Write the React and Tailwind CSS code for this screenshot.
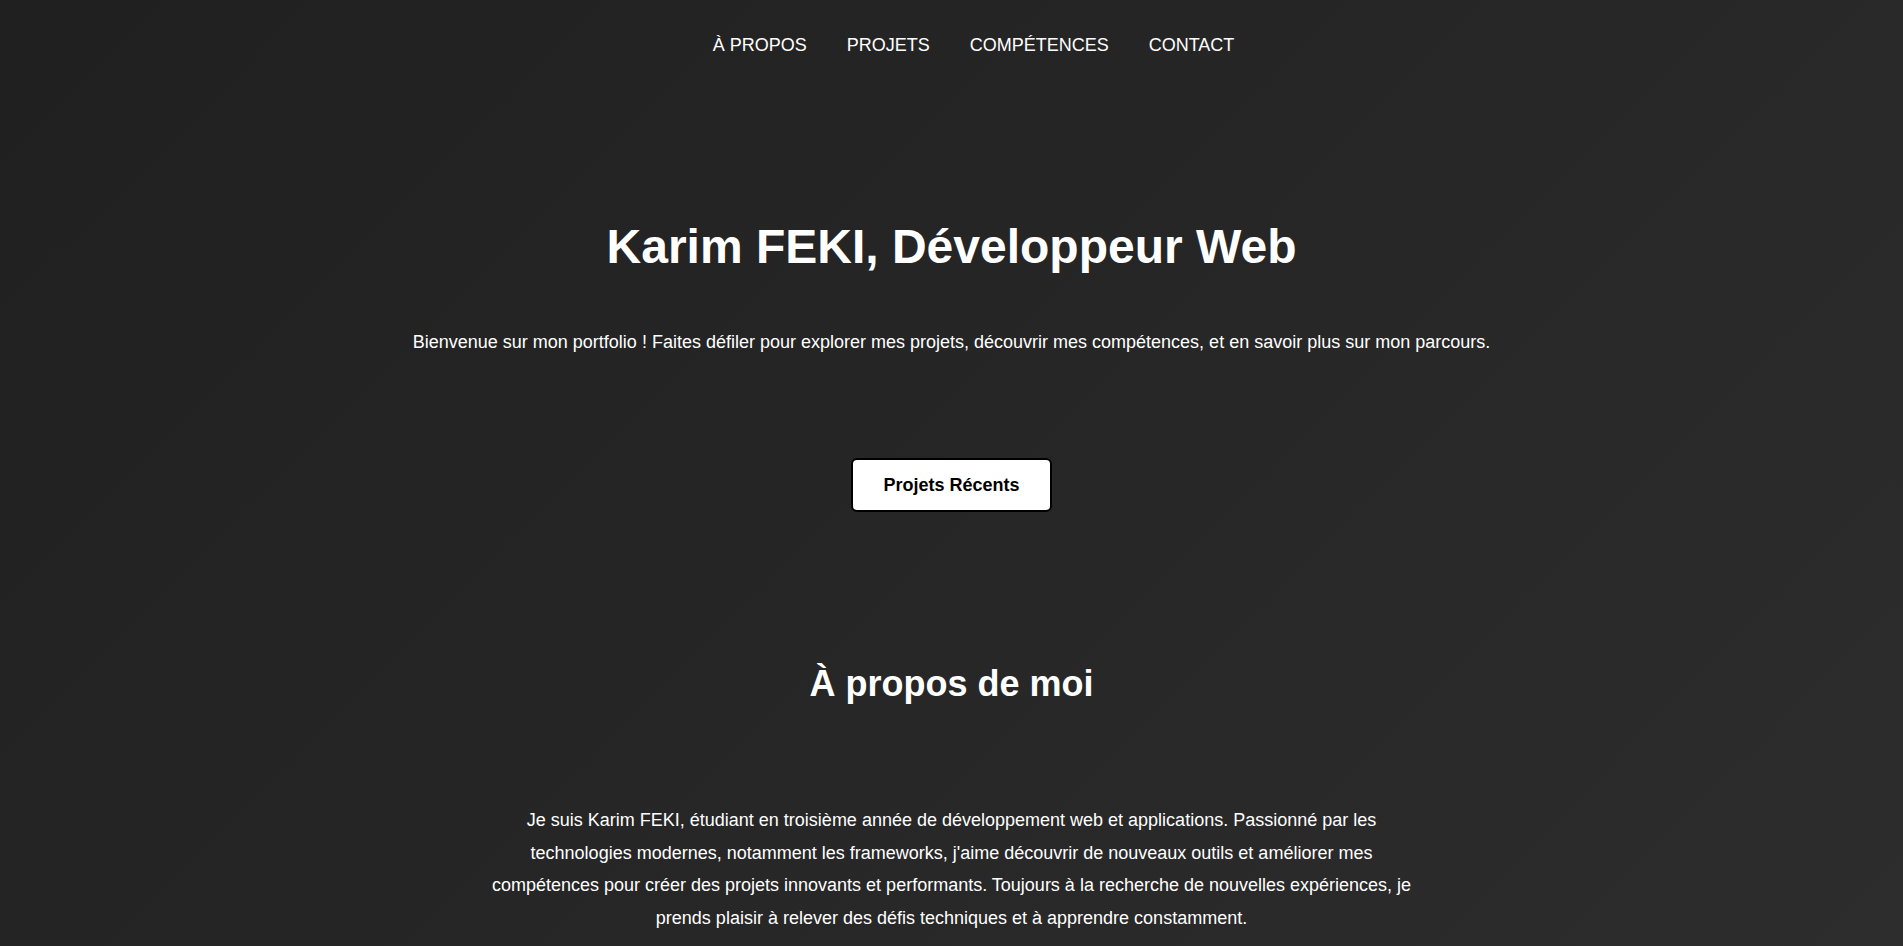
export default function App() {
  const font = { fontFamily: '"Liberation Sans", Arial, Helvetica, sans-serif' };
  return (
    <div
      className="min-h-screen w-full bg-[linear-gradient(135deg,#202020_0%,#262626_50%,#2d2d2d_100%)] text-white flex flex-col items-center"
      style={font}
    >
      <nav className="w-full pt-[35px]">
        <ul className="flex justify-center gap-10 pl-[44px] text-[18px] leading-[20px]">
          <li><a className="text-white">À PROPOS</a></li>
          <li><a className="text-white">PROJETS</a></li>
          <li><a className="text-white">COMPÉTENCES</a></li>
          <li><a className="text-white">CONTACT</a></li>
        </ul>
      </nav>

      <h1 className="mt-[168px] text-[48px] leading-[48px] font-bold text-center">
        Karim FEKI, Développeur Web
      </h1>
      <p className="mt-[61px] text-[18px] leading-[20px] text-center">
        Bienvenue sur mon portfolio ! Faites défiler pour explorer mes projets, découvrir mes compétences, et en savoir plus sur mon parcours.
      </p>
      <button className="mt-[106px] bg-white text-black font-bold text-[18px] leading-[20px] px-[30px] py-[15px] border-2 border-black rounded-[6px]">
        Projets Récents
      </button>

      <h2 className="mt-[154px] text-[36px] leading-[36px] font-bold text-center">
        À propos de moi
      </h2>
      <p className="mt-[102px] max-w-[935px] text-[18px] leading-[32.5px] text-center">
        Je suis Karim FEKI, étudiant en troisième année de développement web et applications. Passionné par les technologies modernes, notamment les frameworks, j'aime découvrir de nouveaux outils et améliorer mes compétences pour créer des projets innovants et performants. Toujours à la recherche de nouvelles expériences, je prends plaisir à relever des défis techniques et à apprendre constamment.
      </p>
    </div>
  );
}
